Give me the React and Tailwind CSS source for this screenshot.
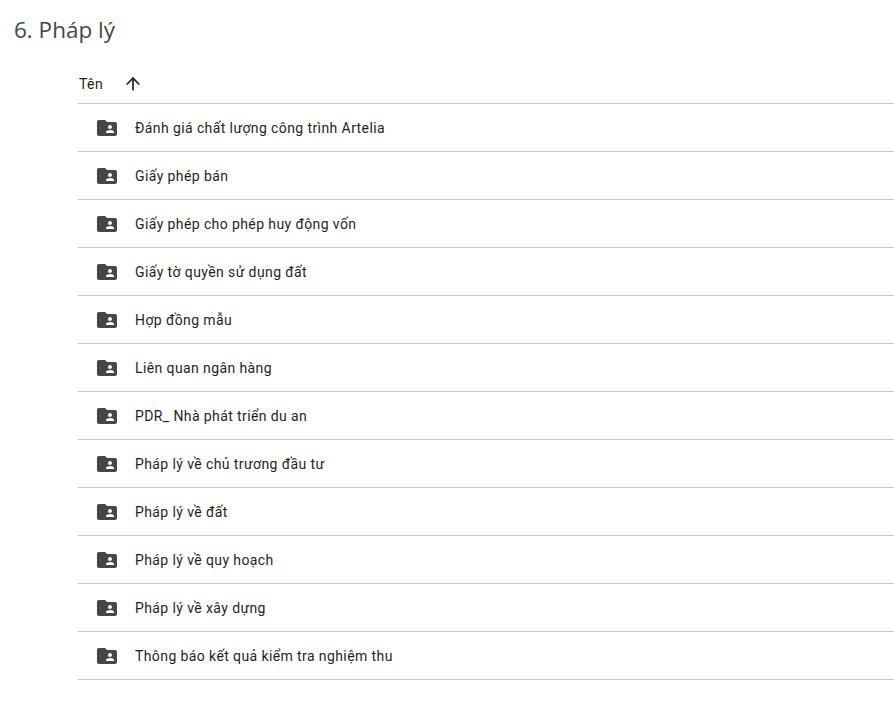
import React from 'react';
import { ArrowUp } from 'lucide-react';

const folders = [
  'Đánh giá chất lượng công trình Artelia',
  'Giấy phép bán',
  'Giấy phép cho phép huy động vốn',
  'Giấy tờ quyền sử dụng đất',
  'Hợp đồng mẫu',
  'Liên quan ngân hàng',
  'PDR_ Nhà phát triển du an',
  'Pháp lý về chủ trương đầu tư',
  'Pháp lý về đất',
  'Pháp lý về quy hoạch',
  'Pháp lý về xây dựng',
  'Thông báo kết quả kiểm tra nghiệm thu',
];

function SharedFolderIcon() {
  return (
    <svg width="24" height="24" viewBox="0 0 24 24" className="shrink-0 fill-[#444746]">
      <path d="M20 6h-8l-2-2H4c-1.1 0-2 .9-2 2v12c0 1.1.9 2 2 2h16c1.1 0 2-.9 2-2V8c0-1.1-.9-2-2-2zm-5 3c1.1 0 2 .9 2 2s-.9 2-2 2-2-.9-2-2 .9-2 2-2zm4 8h-8v-1c0-1.33 2.67-2 4-2s4 .67 4 2v1z" />
    </svg>
  );
}

export default function App() {
  return (
    <div className="h-[704px] w-[894px] overflow-hidden bg-white font-['Roboto',sans-serif]">
      {/* Title */}
      <h1 className="h-[60px] pl-[14px] pt-[14px] font-['Open_Sans',sans-serif] text-[22.5px] leading-[32px] text-[#444746]">
        6. Pháp lý
      </h1>

      <div className="ml-[78px]">
        {/* Header */}
        <div className="flex h-[44px] items-center border-b border-[#c7c7c7] pl-px pt-1 text-sm tracking-[0.4px] text-[#1f1f1f]">
          <span className="w-[44px]">Tên</span>
          <ArrowUp size={20} strokeWidth={2} className="text-[#1f1f1f]" />
        </div>

        {/* Rows */}
        {folders.map((name) => (
          <div key={name} className="flex h-[48px] items-center border-b border-[#c7c7c7] pl-[17px]">
            <SharedFolderIcon />
            <span className="ml-4 text-sm tracking-[0.4px] text-[#1f1f1f]">{name}</span>
          </div>
        ))}
      </div>
    </div>
  );
}
